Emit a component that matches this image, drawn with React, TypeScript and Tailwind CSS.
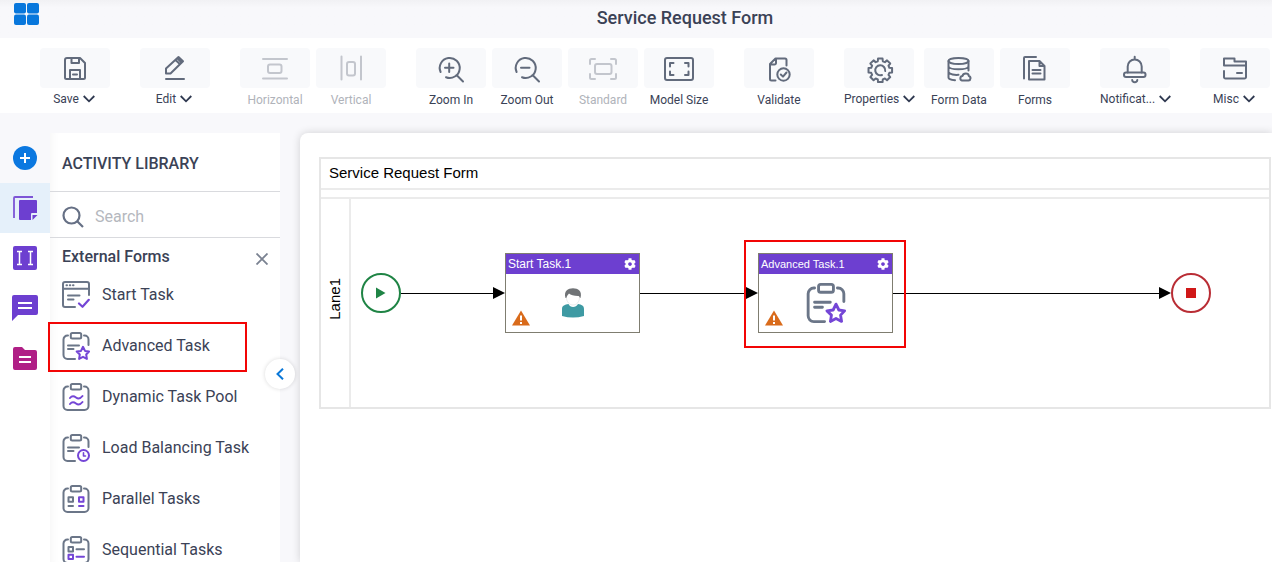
import type { ReactNode } from "react";
import { FaCog } from "react-icons/fa";
import clsx from "clsx";

type Tool = {
	label: string;
	icon: ReactNode;
	menu?: boolean;
	disabled?: boolean;
	wide?: boolean;
};

// outline of an eight toothed gear
const gearPath = (() => {
	const points: string[] = [];
	for (let i = 0; i < 8; i++) {
		const mid = (i * Math.PI) / 4;
		[
			[-0.27, 9.4],
			[-0.19, 12],
			[0.19, 12],
			[0.27, 9.4],
		].forEach(([offset, r]) => {
			const x = 17.3 + r * Math.sin(mid + offset);
			const y = 18.3 - r * Math.cos(mid + offset);
			points.push(`${x.toFixed(2)} ${y.toFixed(2)}`);
		});
	}
	return `M${points.join("L")}Z`;
})();

const toolGroups: Tool[][] = [
	[
		{
			label: "Save",
			menu: true,
			icon: (
				<path d="M8 6H21L26 11V25.500a1.500 1.500 0 0 1-1.500 1.500H7.500A1.500 1.500 0 0 1 6 25.500V8a2 2 0 0 1 2-2ZM12.500 6V11H20V6M11 27V18H21V27M14 22.500H18" />
			),
		},
	],
	[
		{
			label: "Edit",
			menu: true,
			icon: (
				<path d="M7 21.500V16.500L19.500 5L24 9.200L11.500 21.500ZM16.500 8L20.800 12M19 7L22 10M7 27H25" />
			),
		},
	],
	[
		{
			label: "Horizontal",
			disabled: true,
			icon: (
				<>
					<path d="M4 7H28M4 26.500H28" />
					<rect x="9" y="12.500" width="13.500" height="8.500" rx="2" />
				</>
			),
		},
		{
			label: "Vertical",
			disabled: true,
			icon: (
				<>
					<path d="M6.500 4.500V27.500M26 4.500V27.500" />
					<rect x="12" y="10" width="8" height="13.500" rx="2" />
				</>
			),
		},
	],
	[
		{
			label: "Zoom In",
			icon: (
				<path d="M5.600 20A10 10 0 1 1 11 25.200M21.500 23L28 29.500M10 15.700H18.500M14.200 11.500V20" />
			),
		},
		{
			label: "Zoom Out",
			icon: (
				<path d="M5.600 20A10 10 0 1 1 11 25.200M21.500 23L28 29.500M10 15.700H18.500" />
			),
		},
		{
			label: "Standard",
			disabled: true,
			icon: (
				<>
					<path d="M3 12V8.500a1.500 1.500 0 0 1 1.500-1.500H8M24 7h3.500a1.500 1.500 0 0 1 1.500 1.500V12M29 22v3.500a1.500 1.500 0 0 1-1.500 1.500H24M8 27H4.500A1.500 1.500 0 0 1 3 25.500V22" />
					<rect x="8" y="12" width="16.500" height="10" rx="2" />
				</>
			),
		},
		{
			label: "Model Size",
			icon: (
				<>
					<rect x="2" y="6" width="28" height="22" rx="2" />
					<path d="M7 14.500V11H10.500M22 11H25.500V14.500M25.500 19.500V23H22M10.500 23H7V19.500" />
				</>
			),
		},
	],
	[
		{
			label: "Validate",
			icon: (
				<>
					<path d="M12.500 28.500H8.500A1.500 1.500 0 0 1 7 27V12L12.500 6.500H22A1.500 1.500 0 0 1 23.500 8V13.500M7.500 12.500H11.500a1.500 1.500 0 0 0 1.500-1.500V7" />
					<circle cx="20.500" cy="22.500" r="6.200" />
					<path d="M17.800 22.500L20 24.600L23.500 20.500" />
				</>
			),
		},
	],
	[
		{
			label: "Properties",
			menu: true,
			wide: true,
			icon: (
				<>
					<path d={gearPath} />
					<path d="M19 23A5 5 0 1 1 22.200 19" />
				</>
			),
		},
		{
			label: "Form Data",
			icon: (
				<>
					<ellipse cx="15.500" cy="9" rx="10" ry="3" />
					<path d="M5.500 9V25.500C5.500 27 8.500 28 12 28.200M25.500 9V18.500M5.500 14.500C7 18.300 24 18.300 25.500 14.500M5.500 20C6.500 22.500 12 23.200 15.500 22.800" />
					<path d="M19 28.500H25.500a2.300 2.300 0 0 0 .3-4.500C25.500 20.800 20.200 20.800 19.500 24A2.300 2.300 0 0 0 19 28.500Z" />
				</>
			),
		},
		{
			label: "Forms",
			icon: (
				<path d="M5 26.500V6a1 1 0 0 1 1-1H17M10 9H20.500L25.500 14V27.500H10ZM20.500 9V14H25.500M13.500 18H21.500M13.500 21.500H21.500" />
			),
		},
	],
	[
		{
			label: "Notificat...",
			menu: true,
			icon: (
				<>
					<path d="M15.700 4.800V7.500M8.700 20.500V14.500a7 7 0 0 1 14 0V20.500M13.200 28C13.500 31 18 31 18.300 28" />
					<rect x="5" y="20.500" width="21.500" height="4.500" rx="2" />
				</>
			),
		},
	],
	[
		{
			label: "Misc",
			menu: true,
			icon: (
				<path d="M5 19V25a1.500 1.500 0 0 0 1.500 1.500H25.500A1.500 1.500 0 0 0 27 25V9.500H15.500V6.500H5V13.500H27M18 21H23" />
			),
		},
	],
];

const BOARD = "M6 3.500H5.500a4 4 0 0 0-4 4V23a4 4 0 0 0 4 4H22.500a4 4 0 0 0 4-4V7.500a4 4 0 0 0-4-4H22";
const OPEN_BOARD = "M6 3.500H5.500a4 4 0 0 0-4 4V23a4 4 0 0 0 4 4H13M22 3.500H22.500a4 4 0 0 1 4 4V13";

const ClipIcon = ({
	open,
	size = "size-7",
	children,
}: {
	open?: boolean;
	size?: string;
	children: ReactNode;
}) => (
	<svg
		viewBox="0 0 28 28"
		className={clsx("shrink-0 fill-none stroke-[#6b7688]", size)}
		strokeWidth="2"
		strokeLinecap="round"
		strokeLinejoin="round"
	>
		<path d={open ? OPEN_BOARD : BOARD} />
		<rect x="8.800" y="1" width="10.400" height="5.500" rx="1.500" />
		{children}
	</svg>
);

const AdvancedIcon = ({ size }: { size?: string }) => (
	<ClipIcon open size={size}>
		<path d="M6 13.500H17M6 17H11.500" />
		<path
			className="stroke-[#7446d6]"
			d="M21 14.800L23 18.900L27 19.500L24.200 22.500L24.900 26.900L21 24.800L17.100 26.900L17.800 22.500L14.700 19.500L19 18.900Z"
		/>
	</ClipIcon>
);

const activities = [
	{
		name: "Start Task",
		icon: (
			<svg
				viewBox="0 0 28 28"
				className="size-7 shrink-0 fill-none stroke-[#6b7688]"
				strokeWidth="2"
				strokeLinecap="round"
				strokeLinejoin="round"
			>
				<path d="M27 14V3a2 2 0 0 0-2-2H3a2 2 0 0 0-2 2V24a2 2 0 0 0 2 2H13M1 7.700H27M6 14.500H17.500M6 18.500H11.500" />
				<path d="M4.500 4.300H5M7.800 4.300H8.300M11 4.300H11.500" />
				<path className="stroke-[#7446d6]" strokeWidth="2.200" d="M17 22.500L20.500 25.800L26.800 18.800" />
			</svg>
		),
	},
	{ name: "Advanced Task", icon: <AdvancedIcon />, marked: true },
	{
		name: "Dynamic Task Pool",
		icon: (
			<ClipIcon>
				<path
					className="stroke-[#7446d6]"
					d="M8 15C10 12.500 12 13 14 14.500S18.500 15.500 20.500 13M8 21C10 18.500 12 19 14 20.500S18.500 21.500 20.500 19"
				/>
			</ClipIcon>
		),
	},
	{
		name: "Load Balancing Task",
		icon: (
			<ClipIcon open>
				<path d="M6 13.500H17M6 17H11.500" />
				<g className="stroke-[#7446d6]">
					<circle cx="21.500" cy="21.500" r="5.500" />
					<path strokeWidth="1.600" d="M21.500 18.800V22H23.500" />
				</g>
			</ClipIcon>
		),
	},
	{
		name: "Parallel Tasks",
		icon: (
			<ClipIcon>
				<path d="M6.500 12.200H11V16.700H6.500ZM6.500 21H11" />
				<path className="stroke-[#7446d6]" d="M17 12.200H21.500V16.700H17ZM17 21H21.500" />
			</ClipIcon>
		),
	},
	{
		name: "Sequential Tasks",
		icon: (
			<ClipIcon>
				<path d="M6.500 11H11V15.500H6.500ZM14.500 13.200H22" />
				<path className="stroke-[#7446d6]" d="M6.500 18.700H11V23H6.500ZM14.500 20.800H22" />
			</ClipIcon>
		),
	},
];

const railItems = [
	{
		name: "Add",
		icon: (
			<>
				<circle cx="13" cy="13" r="12" fill="#0b78e0" />
				<path d="M13 8V18M8 13H18" stroke="#fff" strokeWidth="2" />
			</>
		),
	},
	{
		name: "Activities",
		active: true,
		icon: (
			<>
				<path d="M2 23V3a1 1 0 0 1 1-1H21" fill="none" stroke="#7d55d6" strokeWidth="1.800" />
				<path d="M8 5H24a1 1 0 0 1 1 1V18H20a1 1 0 0 0-1 1V25H8a1 1 0 0 1-1-1V6a1 1 0 0 1 1-1Z" fill="#6d3fd0" />
				<path d="M20.500 20H25.500L20.500 25Z" fill="#6d3fd0" />
			</>
		),
	},
	{
		name: "Fields",
		icon: (
			<>
				<rect x="1" y="1" width="24" height="24" rx="2" fill="#6d3fd0" />
				<path d="M5 6.500H10M7.500 6.500V19.500M5 19.500H10M16 6.500H21M18.500 6.500V19.500M16 19.500H21" stroke="#fff" strokeWidth="1.500" />
			</>
		),
	},
	{
		name: "Comments",
		icon: (
			<>
				<path d="M2 0H24a2 2 0 0 1 2 2V18a2 2 0 0 1-2 2H6L0 26V2a2 2 0 0 1 2-2Z" fill="#6d3fd0" />
				<path d="M6 8H20M6 13H20" stroke="#fff" strokeWidth="2" />
			</>
		),
	},
	{
		name: "Files",
		icon: (
			<>
				<path d="M3 2H10L13 5H23a2 2 0 0 1 2 2V23a2 2 0 0 1-2 2H3a2 2 0 0 1-2-2V4a2 2 0 0 1 2-2Z" fill="#b01f86" />
				<path d="M7 12H19M7 17H19" stroke="#fff" strokeWidth="2" />
			</>
		),
	},
];

const ToolButton = ({ tool }: { tool: Tool }) => (
	<button
		type="button"
		disabled={tool.disabled}
		className={clsx(
			"flex shrink-0 flex-col",
			tool.wide ? "w-[74px]" : "w-[70px]",
			tool.disabled ? "text-[#b0b3ba]" : "text-[#3a4256]"
		)}
	>
		<span className="flex h-10 w-[70px] items-center justify-center rounded bg-[#f8f9fb]">
			<svg
				viewBox="0 0 32 32"
				className={clsx(
					"size-8 fill-none",
					tool.disabled ? "stroke-[#c3c6cd]" : "stroke-[#626b7c]"
				)}
				strokeWidth="2"
				strokeLinecap="round"
				strokeLinejoin="round"
			>
				{tool.icon}
			</svg>
		</span>
		<span
			className={clsx(
				"flex min-w-[70px] items-center justify-center gap-1 self-start text-xs whitespace-nowrap",
				tool.menu ? "mt-[3px] pr-[2px]" : "mt-1"
			)}
		>
			{tool.label}
			{tool.menu && <Chevron />}
		</span>
	</button>
);

const Chevron = () => (
	<svg viewBox="0 0 12 8" className="h-2 w-3 shrink-0 fill-none stroke-[#2f3950]" strokeWidth="1.800">
		<path d="M.7 1L6 6.300L11.300 1" />
	</svg>
);

const Connector = ({ className }: { className: string }) => (
	<div className={clsx("flex items-center", className)}>
		<div className="h-px flex-1 bg-black" />
		<svg viewBox="0 0 12 12" className="h-3 w-3 shrink-0 fill-black">
			<path d="M0 0L12 6L0 12Z" />
		</svg>
	</div>
);

const TaskNode = ({
	title,
	titleClass,
	children,
}: {
	title: string;
	titleClass: string;
	children: ReactNode;
}) => (
	<div className="relative flex h-20 w-[135px] shrink-0 flex-col border border-[#7f7d70] bg-white">
		<div className="flex h-5 items-center justify-between bg-[#6d3fd0] pr-[3px] pl-[2px] text-white">
			<span className={titleClass}>{title}</span>
			<FaCog className="size-3" />
		</div>
		<div className="flex flex-1 items-center justify-center">{children}</div>
		<svg viewBox="0 0 18 16" className="absolute bottom-[6px] left-[6px] h-4 w-[18px]">
			<path d="M9 .5L18 15.500H0Z" fill="#d96b1b" />
			<path d="M9 5.500V10.500M9 12V14" stroke="#fff" strokeWidth="2" />
		</svg>
	</div>
);

const Library = () => (
	<aside className="relative flex w-[230px] shrink-0 flex-col bg-white text-base text-[#3b4256] shadow-[inset_8px_0_8px_-6px_rgba(0,0,0,0.04)]">
		<h2 className="flex h-[59px] shrink-0 items-center border-b border-[#d9dade] px-3 pt-1 font-medium">
			ACTIVITY LIBRARY
		</h2>
		<label className="flex h-[46px] shrink-0 items-center gap-[11px] border-b border-[#d9dade] px-3 pt-1">
			<svg viewBox="0 0 22 22" className="size-[22px] shrink-0 fill-none stroke-[#667085]" strokeWidth="2.200">
				<circle cx="9.500" cy="9.500" r="8" />
				<path d="M15 15L21 21" />
			</svg>
			<input
				type="text"
				aria-label="Search"
				placeholder="Search"
				className="w-full min-w-0 outline-none placeholder:text-[#b5b8be]"
			/>
		</label>
		<div className="flex h-[37px] shrink-0 items-center justify-between px-3">
			<h3 className="pt-px font-medium">External Forms</h3>
			<button type="button" aria-label="Close" className="pt-1">
				<svg viewBox="0 0 12 12" className="size-3 stroke-[#7a8291]" strokeWidth="1.800">
					<path d="M.5 .5L11.500 11.500M11.500 .5L.5 11.500" />
				</svg>
			</button>
		</div>
		<ul className="min-h-0 flex-1">
			{activities.map((item) => (
				<li key={item.name} className="relative mb-[11px]">
					<button type="button" className="flex h-10 w-full items-center gap-3 px-3">
						{item.icon}
						{item.name}
					</button>
					{item.marked && (
						<span className="pointer-events-none absolute -top-1 -left-[2px] h-[50px] w-[199px] border-2 border-[#f20505]" />
					)}
				</li>
			))}
		</ul>
		<button
			type="button"
			aria-label="Collapse"
			className="absolute top-[226px] -right-[15px] flex size-[30px] items-center justify-center rounded-full bg-white shadow-[0_0_4px_rgba(0,0,0,0.15)]"
		>
			<svg viewBox="0 0 8 12" className="h-3 w-2 fill-none stroke-[#0b78d8]" strokeWidth="2">
				<path d="M7 .7L1.500 6L7 11.300" />
			</svg>
		</button>
	</aside>
);

const Diagram = () => (
	<section className="mt-6 mr-px ml-[19px] border-2 border-[#e6e6e6] font-['Liberation_Sans',sans-serif] text-[15px] text-black">
		<h2 className="flex h-[29px] items-center px-2">Service Request Form</h2>
		<div className="h-[11px] border-y-2 border-[#ebebeb]" />
		<div className="flex h-[208px]">
			<div className="flex w-[30px] shrink-0 items-center justify-center border-r-2 border-[#ebebeb] pb-2">
				<span className="rotate-180 [writing-mode:vertical-rl]">Lane1</span>
			</div>
			<div className="flex flex-1 items-center pr-[58px] pb-[20px] pl-[10px]">
				<div className="flex size-10 shrink-0 items-center justify-center rounded-full border-2 border-[#1f8445]">
					<svg viewBox="0 0 10 12" className="h-3 w-[10px] fill-[#1f8445]">
						<path d="M0 .5L9.500 6L0 11.500Z" />
					</svg>
				</div>
				<Connector className="w-[104px] shrink-0" />
				<TaskNode title="Start Task.1" titleClass="text-xs">
					<svg viewBox="0 0 24 30" className="h-[30px] w-6">
						<path d="M1 28V21C1 17.500 4 16.500 7.500 16C9 20 15 20 17 16C20.500 16.500 23 17.500 23 21V28Q12 31 1 28Z" fill="#3e9aa3" />
						<path d="M4.500 10C2.500 3 7 .3 12 .3C17 .3 21.500 3 19.500 10L18.500 9.500C18.500 8.500 18 8 17 8C13 8 9.500 7 8 5.500C7 7 5.500 8 5.500 10Z" fill="#707376" />
						<path d="M5.500 9.500C5.500 14 8.500 17 12 17S18.500 14 18.500 9.500" fill="none" stroke="#d9dcdd" strokeWidth=".6" />
					</svg>
				</TaskNode>
				<Connector className="w-[118px] shrink-0" />
				<div className="relative shrink-0">
					<TaskNode title="Advanced Task.1" titleClass="text-[11px]">
						<AdvancedIcon size="size-10" />
					</TaskNode>
					<span className="pointer-events-none absolute -top-[13px] -left-[14px] h-[108px] w-[162px] border-2 border-[#f20505]" />
				</div>
				<Connector className="flex-1" />
				<div className="flex size-10 shrink-0 items-center justify-center rounded-full border-2 border-[#b92d35]">
					<div className="size-[10px] bg-[#d01818]" />
				</div>
			</div>
		</div>
	</section>
);

export default function App() {
	return (
		<div className="flex h-screen flex-col overflow-hidden bg-[#f8f8fb] font-[Roboto,sans-serif] text-[#3b4256]">
			<header className="flex h-[38px] shrink-0 bg-linear-to-b from-[#f1f1f4] to-[#f8f8fb] to-20%">
				<a href="#" aria-label="Home" className="w-[98px] shrink-0 pt-[2px] pl-[14px]">
					<svg viewBox="0 0 25 24" className="h-6 w-[25px] fill-[#0877dc]">
						<rect x="0" y="1" width="12" height="10.500" rx="2" />
						<rect x="13" y="1" width="12" height="10.500" rx="2" />
						<rect x="0" y="12.500" width="12" height="10.500" rx="2" />
						<rect x="13" y="12.500" width="12" height="10.500" rx="2" />
					</svg>
				</a>
				<h1 className="flex-1 pt-1 text-center text-lg font-medium">Service Request Form</h1>
			</header>
			<nav className="flex h-[75px] shrink-0 gap-[30px] bg-white pt-[10px] pl-10">
				{toolGroups.map((group) => (
					<div key={group[0].label} className="flex gap-[6px]">
						{group.map((tool) => (
							<ToolButton key={tool.label} tool={tool} />
						))}
					</div>
				))}
			</nav>
			<div className="flex min-h-0 flex-1 pt-5">
				<nav className="flex w-[50px] shrink-0 flex-col">
					{railItems.map((item, i) => (
						<button
							key={item.name}
							type="button"
							aria-label={item.name}
							className={clsx(
								"flex h-[50px] shrink-0 items-center justify-center",
								item.active && "bg-[#e5f0fa]",
								i > 1 && "bg-white"
							)}
						>
							<svg viewBox="0 0 26 26" className="size-[26px]">
								{item.icon}
							</svg>
						</button>
					))}
					<div className="flex-1 bg-white" />
				</nav>
				<Library />
				<main className="ml-5 min-w-0 flex-1 rounded-tl-lg bg-white shadow-[0_0_8px_rgba(0,0,0,0.16)]">
					<Diagram />
				</main>
			</div>
		</div>
	);
}
